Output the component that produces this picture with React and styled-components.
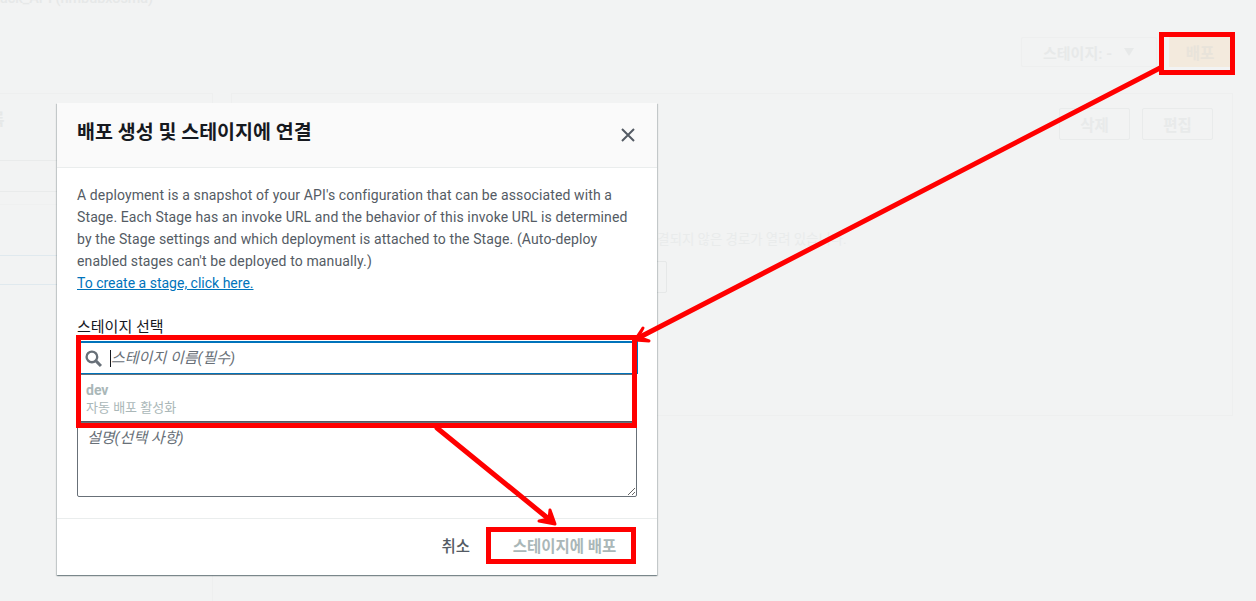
import React from 'react';
import styled, { createGlobalStyle } from 'styled-components';

const GlobalStyle = createGlobalStyle`
	html, body {
		margin: 0;
		padding: 0;
		height: 100%;
		overflow: hidden;
		background: #f2f3f3;
	}
	* {
		box-sizing: border-box;
	}
`;

const fontStack = `'Roboto', 'Noto Sans CJK KR', sans-serif`;

const Page = styled.div`
	position: relative;
	width: 1256px;
	height: 601px;
	overflow: hidden;
	background: #f2f3f3;
	font-family: ${fontStack};
	font-size: 14px;
`;

/* dimmed page behind the modal */
const PageTitle = styled.div`
	margin-top: -8px;
	height: 14px;
	line-height: 14px;
	font-size: 14.4px;
	font-weight: 500;
	white-space: nowrap;
	color: #e6e8e8;
`;

const Toolbar = styled.div`
	display: flex;
	justify-content: flex-end;
	align-items: center;
	gap: 12px;
	margin-top: 31px;
	padding-right: 25px;
`;

const StageSelect = styled.div`
	display: flex;
	align-items: center;
	gap: 12px;
	width: 136px;
	height: 30px;
	padding-left: 21px;
	border: 1px solid #eeefef;
	border-radius: 2px;
	font-size: 15px;
	font-weight: 700;
	color: #e7e9e9;

	&::after {
		content: '';
		border-left: 5.5px solid transparent;
		border-right: 5.5px solid transparent;
		border-top: 8px solid #e7e9e9;
	}
`;

const DeployButton = styled.div`
	display: flex;
	align-items: center;
	justify-content: center;
	width: 62px;
	height: 30px;
	background: #f3eadd;
	font-size: 15.5px;
	font-weight: 700;
	color: #e8e3da;
`;

const Columns = styled.div`
	display: flex;
	gap: 18px;
	margin-top: 26px;
	padding-right: 23px;
`;

const LeftPanel = styled.div`
	width: 213px;
	height: 508px;
	border-right: 1px solid #eeefef;
	border-top: 1px solid #eeefef;
	overflow: hidden;
`;

const LeftHeading = styled.div`
	height: 67px;
	padding-top: 13px;
	margin-left: -85px;
	font-size: 15.5px;
	font-weight: 700;
	white-space: nowrap;
	color: #e6e8e8;
	border-bottom: 1px solid #e9ebeb;
`;

const LeftRow = styled.div`
	height: ${(p) => p.$height}px;
	border-bottom: 1px solid ${(p) => p.$line};
`;

const RightPanel = styled.div`
	flex: 1;
	height: 323px;
	padding: 14px 19px 0 0;
	border: 1px solid #eeefef;
`;

const PanelActions = styled.div`
	display: flex;
	justify-content: flex-end;
	gap: 12px;
`;

const GhostButton = styled.div`
	display: flex;
	align-items: center;
	justify-content: center;
	width: 71px;
	height: 32px;
	border: 1px solid #e9ebeb;
	border-radius: 2px;
	font-size: 15.5px;
	font-weight: 700;
	color: #e8eaea;
`;

const PanelNote = styled.div`
	margin-top: 91px;
	padding-left: 413px;
	font-size: 13.4px;
	line-height: 18px;
	color: #e9ebeb;
	white-space: nowrap;
`;

const GhostField = styled.div`
	width: 435px;
	height: 32px;
	margin-top: 12px;
	border: 1px solid #e6e8e8;
	border-radius: 2px;
`;

/* modal */
const Modal = styled.div`
	position: absolute;
	left: 57px;
	top: 103px;
	width: 600px;
	height: 472px;
	background: #fff;
	box-shadow: 0 1px 1px 0 rgba(0, 28, 36, 0.3), 1px 1px 1px 0 rgba(0, 28, 36, 0.15), -1px 1px 1px 0 rgba(0, 28, 36, 0.15);
	display: flex;
	flex-direction: column;
`;

const ModalHeader = styled.div`
	display: flex;
	align-items: center;
	justify-content: space-between;
	height: 65px;
	padding: 0 21px 0 20px;
	background: #fafafa;
	border-bottom: 1px solid #eaeded;
`;

const ModalTitle = styled.div`
	font-size: 19.5px;
	line-height: 24px;
	font-weight: 700;
	color: #16191f;
	margin-top: -4px;
`;

const CloseIcon = styled.svg`
	width: 16px;
	height: 16px;
	color: #545b64;
`;

const ModalBody = styled.div`
	flex: 1;
	padding: 16px 20px 0;
`;

const Description = styled.p`
	margin: 0;
	font-size: 14px;
	line-height: 22px;
	letter-spacing: 0.12px;
	color: #545b64;
`;

const StageLink = styled.a`
	color: #0073bb;
	letter-spacing: 0;
	text-decoration: underline;
`;

const FieldLabel = styled.div`
	margin-top: 23px;
	font-size: 15px;
	line-height: 20px;
	color: #16191f;
`;

const SearchBox = styled.div`
	display: flex;
	align-items: center;
	width: 561px;
	height: 33px;
	margin-top: 4px;
	padding-left: 7px;
	border: 1px solid #0073bb;
	border-top-width: 2px;
	background: #fff;
`;

const SearchIcon = styled.svg`
	flex: none;
	width: 17px;
	height: 17px;
	color: #687078;
`;

const Caret = styled.span`
	flex: none;
	width: 1px;
	height: 17px;
	margin-left: 8px;
	background: #16191f;
`;

const SearchInput = styled.input`
	flex: 1;
	border: 0;
	outline: 0;
	padding: 0;
	background: transparent;
	font: italic 15px ${fontStack};

	&::placeholder {
		color: #687078;
		opacity: 1;
	}
`;

const StageOption = styled.div`
	width: 560px;
	height: 48px;
	padding: 7px 8px 0 8px;
	border: 1px solid #545b64;
	border-top-color: #687078;
	background: #fff;
`;

const OptionName = styled.div`
	line-height: 16px;
	font-weight: 700;
	color: #aab7b8;
`;

const OptionNote = styled.div`
	margin-top: 1px;
	line-height: 18px;
	font-size: 13px;
	color: #aab7b8;
`;

const DescriptionArea = styled.textarea`
	display: block;
	width: 560px;
	height: 75px;
	padding: 5px 9px;
	border: 1px solid #687078;
	border-radius: 2px;
	outline: 0;
	font: italic 15px/20px ${fontStack};

	&::placeholder {
		color: #687078;
		opacity: 1;
	}
`;

const ModalFooter = styled.div`
	display: flex;
	align-items: center;
	justify-content: flex-end;
	gap: 12px;
	height: 57px;
	padding: 0 21px 4px 0;
	border-top: 1px solid #eaeded;
`;

const CancelButton = styled.div`
	padding: 0 4px;
	font-size: 15.5px;
	font-weight: 500;
	color: #545b64;
`;

const SubmitButton = styled.div`
	display: flex;
	align-items: center;
	justify-content: center;
	width: 150px;
	height: 32px;
	padding-left: 7px;
	font-size: 15.5px;
	font-weight: 700;
	color: #aab7b8;
`;

/* red annotations drawn on top of the screenshot */
const Annotations = styled.svg`
	position: absolute;
	left: 0;
	top: 0;
	width: 1256px;
	height: 601px;
	pointer-events: none;
`;

function App() {
	return (
		<Page>
			<GlobalStyle />
			<PageTitle>ack_API (hmbubxosma)</PageTitle>
			<Toolbar>
				<StageSelect>스테이지: -</StageSelect>
				<DeployButton>배포</DeployButton>
			</Toolbar>
			<Columns>
				<LeftPanel>
					<LeftHeading>스테이지 목록</LeftHeading>
					<LeftRow $height={31} $line='#e9ebeb' />
					<LeftRow $height={13} $line='#eff0f0' />
					<LeftRow $height={51} $line='#e0e9ee' />
					<LeftRow $height={29} $line='#e0e9ee' />
				</LeftPanel>
				<RightPanel>
					<PanelActions>
						<GhostButton>삭제</GhostButton>
						<GhostButton>편집</GhostButton>
					</PanelActions>
					<PanelNote>연결되지 않은 경로가 열려 있습니다.</PanelNote>
					<GhostField />
				</RightPanel>
			</Columns>

			<Modal>
				<ModalHeader>
					<ModalTitle>배포 생성 및 스테이지에 연결</ModalTitle>
					<CloseIcon viewBox='0 0 16 16' fill='none' stroke='currentColor' strokeWidth='2'>
						<path d='M2 2l12 12M14 2L2 14' />
					</CloseIcon>
				</ModalHeader>
				<ModalBody>
					<Description>
						A deployment is a snapshot of your API's configuration that can be associated with a Stage. Each Stage has an invoke URL and the behavior of this invoke URL is determined by the Stage settings and which deployment is attached to the Stage. (Auto-deploy enabled stages can't be deployed to manually.)
						<br />
						<StageLink>To create a stage, click here.</StageLink>
					</Description>
					<FieldLabel>스테이지 선택</FieldLabel>
					<SearchBox>
						<SearchIcon viewBox='0 0 16 16' fill='none' stroke='currentColor'>
							<circle cx='6.5' cy='6.5' r='5' strokeWidth='2.2' />
							<path d='M10.5 10.5L15 15' strokeWidth='2.8' />
						</SearchIcon>
						<Caret />
						<SearchInput readOnly placeholder='스테이지 이름(필수)' />
					</SearchBox>
					<StageOption>
						<OptionName>dev</OptionName>
						<OptionNote>자동 배포 활성화</OptionNote>
					</StageOption>
					<DescriptionArea readOnly placeholder='설명(선택 사항)' />
				</ModalBody>
				<ModalFooter>
					<CancelButton>취소</CancelButton>
					<SubmitButton>스테이지에 배포</SubmitButton>
				</ModalFooter>
			</Modal>

			<Annotations viewBox='0 0 1256 601'>
				<g fill='none' stroke='#ff0000' strokeWidth='5'>
					<rect x='1161.5' y='34.5' width='71' height='38' />
					<rect x='78.5' y='337.5' width='556' height='88' />
					<rect x='488.5' y='529.5' width='145' height='32' />
				</g>
				<g fill='none' stroke='#ff0000' strokeWidth='5' strokeLinecap='round'>
					<path d='M1160 68L640 337' />
					<path d='M437 428L550 520' />
				</g>
				<g fill='#ff0000' stroke='#ff0000' strokeWidth='3' strokeLinejoin='round'>
					<path d='M643 328L635 340L649 341L638 337Z' />
					<path d='M550 510L555 524L539 521L549 519Z' />
				</g>
			</Annotations>
		</Page>
	);
}

export default App;
